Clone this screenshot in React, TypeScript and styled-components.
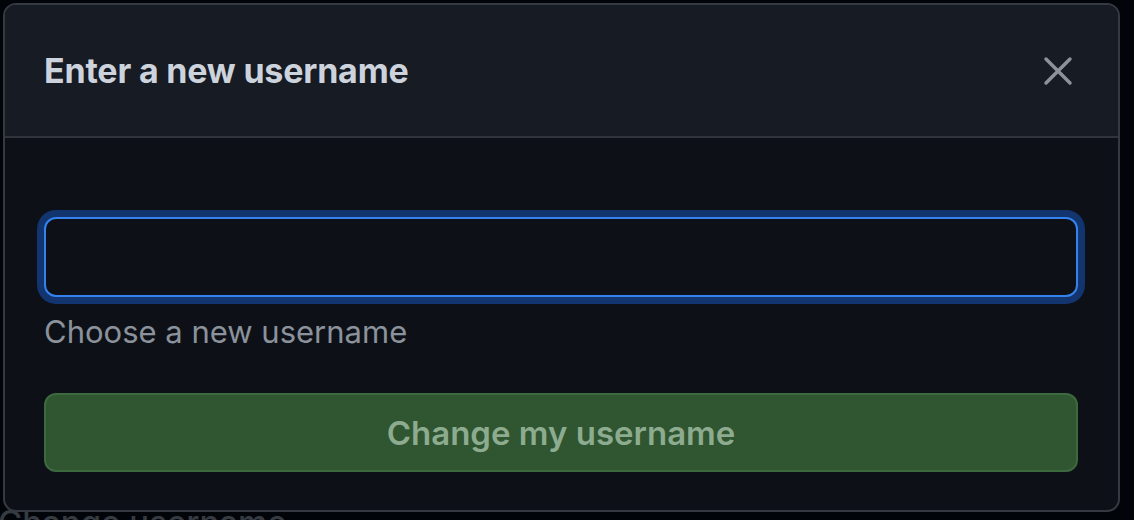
import React from 'react';
import styled, { createGlobalStyle } from 'styled-components';

const GlobalStyle = createGlobalStyle`
  html, body {
    margin: 0;
    padding: 0;
    background: #010409;
  }
  body {
    font-family: Inter, "Noto Sans", "Liberation Sans", sans-serif;
  }
  * {
    box-sizing: border-box;
  }
`;

const Screen = styled.div`
  position: relative;
  width: 1134px;
  height: 520px;
  overflow: hidden;
  background: #010409;
`;

// page behind the dialog, mostly hidden
const BackPage = styled.div`
  padding: 503px 0 0 0;
`;

const BackHeading = styled.h2`
  margin: 0;
  margin-left: -2px;
  font-size: 33px;
  font-weight: 500;
  color: #363b42;
  line-height: 38px;
`;

const Dialog = styled.div`
  position: absolute;
  left: 3px;
  top: 3px;
  width: 1117px;
  height: 509px;
  display: flex;
  flex-direction: column;
  background: #0d1117;
  border: 2px solid #353a42;
  border-radius: 13px;
  overflow: hidden;
`;

const Header = styled.div`
  display: flex;
  align-items: center;
  justify-content: space-between;
  height: 133px;
  padding: 0 40px 0 39px;
  background: #171b23;
  border-bottom: 2px solid #30353d;
`;

const Title = styled.h1`
  margin: 0;
  font-size: 34px;
  font-weight: 650;
  color: #cdd3dc;
  letter-spacing: -0.2px;
`;

const CloseButton = styled.button`
  display: flex;
  align-items: center;
  justify-content: center;
  width: 40px;
  height: 40px;
  padding: 0;
  border: none;
  background: transparent;
  color: #8b929c;
  cursor: pointer;
`;

const Body = styled.div`
  display: flex;
  flex-direction: column;
  padding: 79px 40px 0 39px;
`;

const Input = styled.input`
  width: 100%;
  height: 80px;
  padding: 0 20px;
  background: #0d1117;
  border: 2px solid #3582ee;
  border-radius: 12px;
  box-shadow: 0 0 0 7px #12356f;
  color: #c9d1d9;
  font-family: inherit;
  font-size: 28px;
  outline: none;
`;

const Caption = styled.p`
  margin: 14px 0 0 0;
  font-size: 31px;
  line-height: 42px;
  color: #8b929c;
`;

const SubmitButton = styled.button`
  margin-top: 40px;
  width: 100%;
  height: 79px;
  background: #2f5531;
  border: 2px solid #3d693e;
  border-radius: 12px;
  color: #8dab8e;
  font-family: inherit;
  font-size: 33px;
  font-weight: 600;
  cursor: not-allowed;
`;

export default function App() {
  return (
    <Screen>
      <GlobalStyle />
      <BackPage>
        <BackHeading>Change username</BackHeading>
      </BackPage>
      <Dialog role="dialog">
        <Header>
          <Title>Enter a new username</Title>
          <CloseButton aria-label="Close">
            <svg width="40" height="40" viewBox="0 0 16 16" fill="none" stroke="currentColor" strokeWidth="1.4" strokeLinecap="round">
              <path d="M3.2 3.2 L12.8 12.8 M12.8 3.2 L3.2 12.8" />
            </svg>
          </CloseButton>
        </Header>
        <Body>
          <Input type="text" aria-label="New username" />
          <Caption>Choose a new username</Caption>
          <SubmitButton disabled>Change my username</SubmitButton>
        </Body>
      </Dialog>
    </Screen>
  );
}
